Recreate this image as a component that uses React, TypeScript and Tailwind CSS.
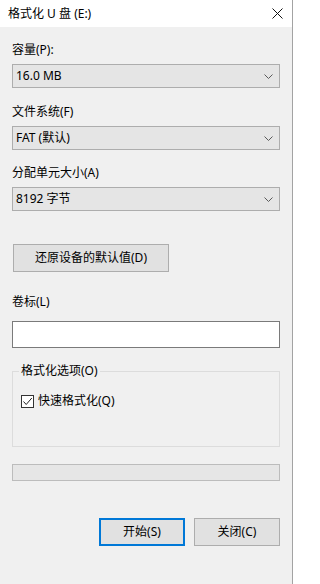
import React from 'react';

const Chevron = () => (
  <svg width="9" height="5" viewBox="0 0 9 5" className="shrink-0">
    <path d="M0.5 0.5 L4.5 4.5 L8.5 0.5" fill="none" stroke="#5a5a5a" strokeWidth="1" />
  </svg>
);

const Combo = ({ value }: { value: string }) => (
  <div className="mt-[6px] h-[24px] flex items-center justify-between bg-[#e5e5e5] border border-[#adadad] pl-[3px] pr-[6px]">
    <span>{value}</span>
    <Chevron />
  </div>
);

const Label = ({ text, className }: { text: string; className: string }) => (
  <div className={`h-[16px] ${className}`}>{text}</div>
);

export default function App() {
  return (
    <div className="w-[293px] h-[584px] bg-[#f0f0f0] border-r border-[#a3a3a3] flex flex-col text-[12px] leading-[16px] text-black font-['Noto_Sans','Noto_Sans_CJK_SC',sans-serif] overflow-hidden">
      {/* Title bar */}
      <div className="h-[27px] bg-white flex items-center justify-between pl-[8px] pr-[9px] shrink-0">
        <span className="text-[12px]">格式化 U 盘 (E:)</span>
        <svg width="11" height="11" viewBox="0 0 11 11">
          <path d="M0.5 0.5 L10.5 10.5 M10.5 0.5 L0.5 10.5" stroke="#111" strokeWidth="1" />
        </svg>
      </div>

      {/* Body */}
      <div className="flex flex-col px-[12px]">
        <div className="mt-[15px] h-[16px]">容量(P):</div>
        <Combo value="16.0 MB" />

        <Label text="文件系统(F)" className="mt-[16px]" />
        <Combo value="FAT (默认)" />

        <Label text="分配单元大小(A)" className="mt-[15px]" />
        <Combo value="8192 字节" />

        <button className="mt-[33px] ml-px w-[156px] h-[28px] bg-[#e1e1e1] border border-[#adadad] flex items-center justify-center">
          还原设备的默认值(D)
        </button>

        <Label text="卷标(L)" className="mt-[22px]" />
        <div className="mt-[11px] h-[27px] bg-white border border-[#7a7a7a]" />

        <fieldset className="mt-[15px] h-[84px] border border-[#dcdcdc] pl-[8px]">
          <legend className="-ml-[2px] px-[2px] h-[16px]">格式化选项(O)</legend>
          <div className="mt-[14px] h-[16px] flex items-center gap-[4px]">
            <span className="w-[13px] h-[13px] bg-white border border-[#333] flex items-center justify-center">
              <svg width="11" height="11" viewBox="0 0 11 11">
                <path d="M1.5 5.5 L4.2 8.5 L9.8 2" fill="none" stroke="#222" strokeWidth="1" />
              </svg>
            </span>
            <span>快速格式化(Q)</span>
          </div>
        </fieldset>

        <div className="mt-[17px] h-[17px] bg-[#e6e6e6] border border-[#bcbcbc]" />

        <div className="mt-[37px] flex justify-end gap-[9px]">
          <button className="w-[86px] h-[28px] bg-[#e1e1e1] border-2 border-[#0078d7] flex items-center justify-center">
            开始(S)
          </button>
          <button className="w-[86px] h-[28px] bg-[#e1e1e1] border border-[#adadad] flex items-center justify-center">
            关闭(C)
          </button>
        </div>
      </div>
    </div>
  );
}
